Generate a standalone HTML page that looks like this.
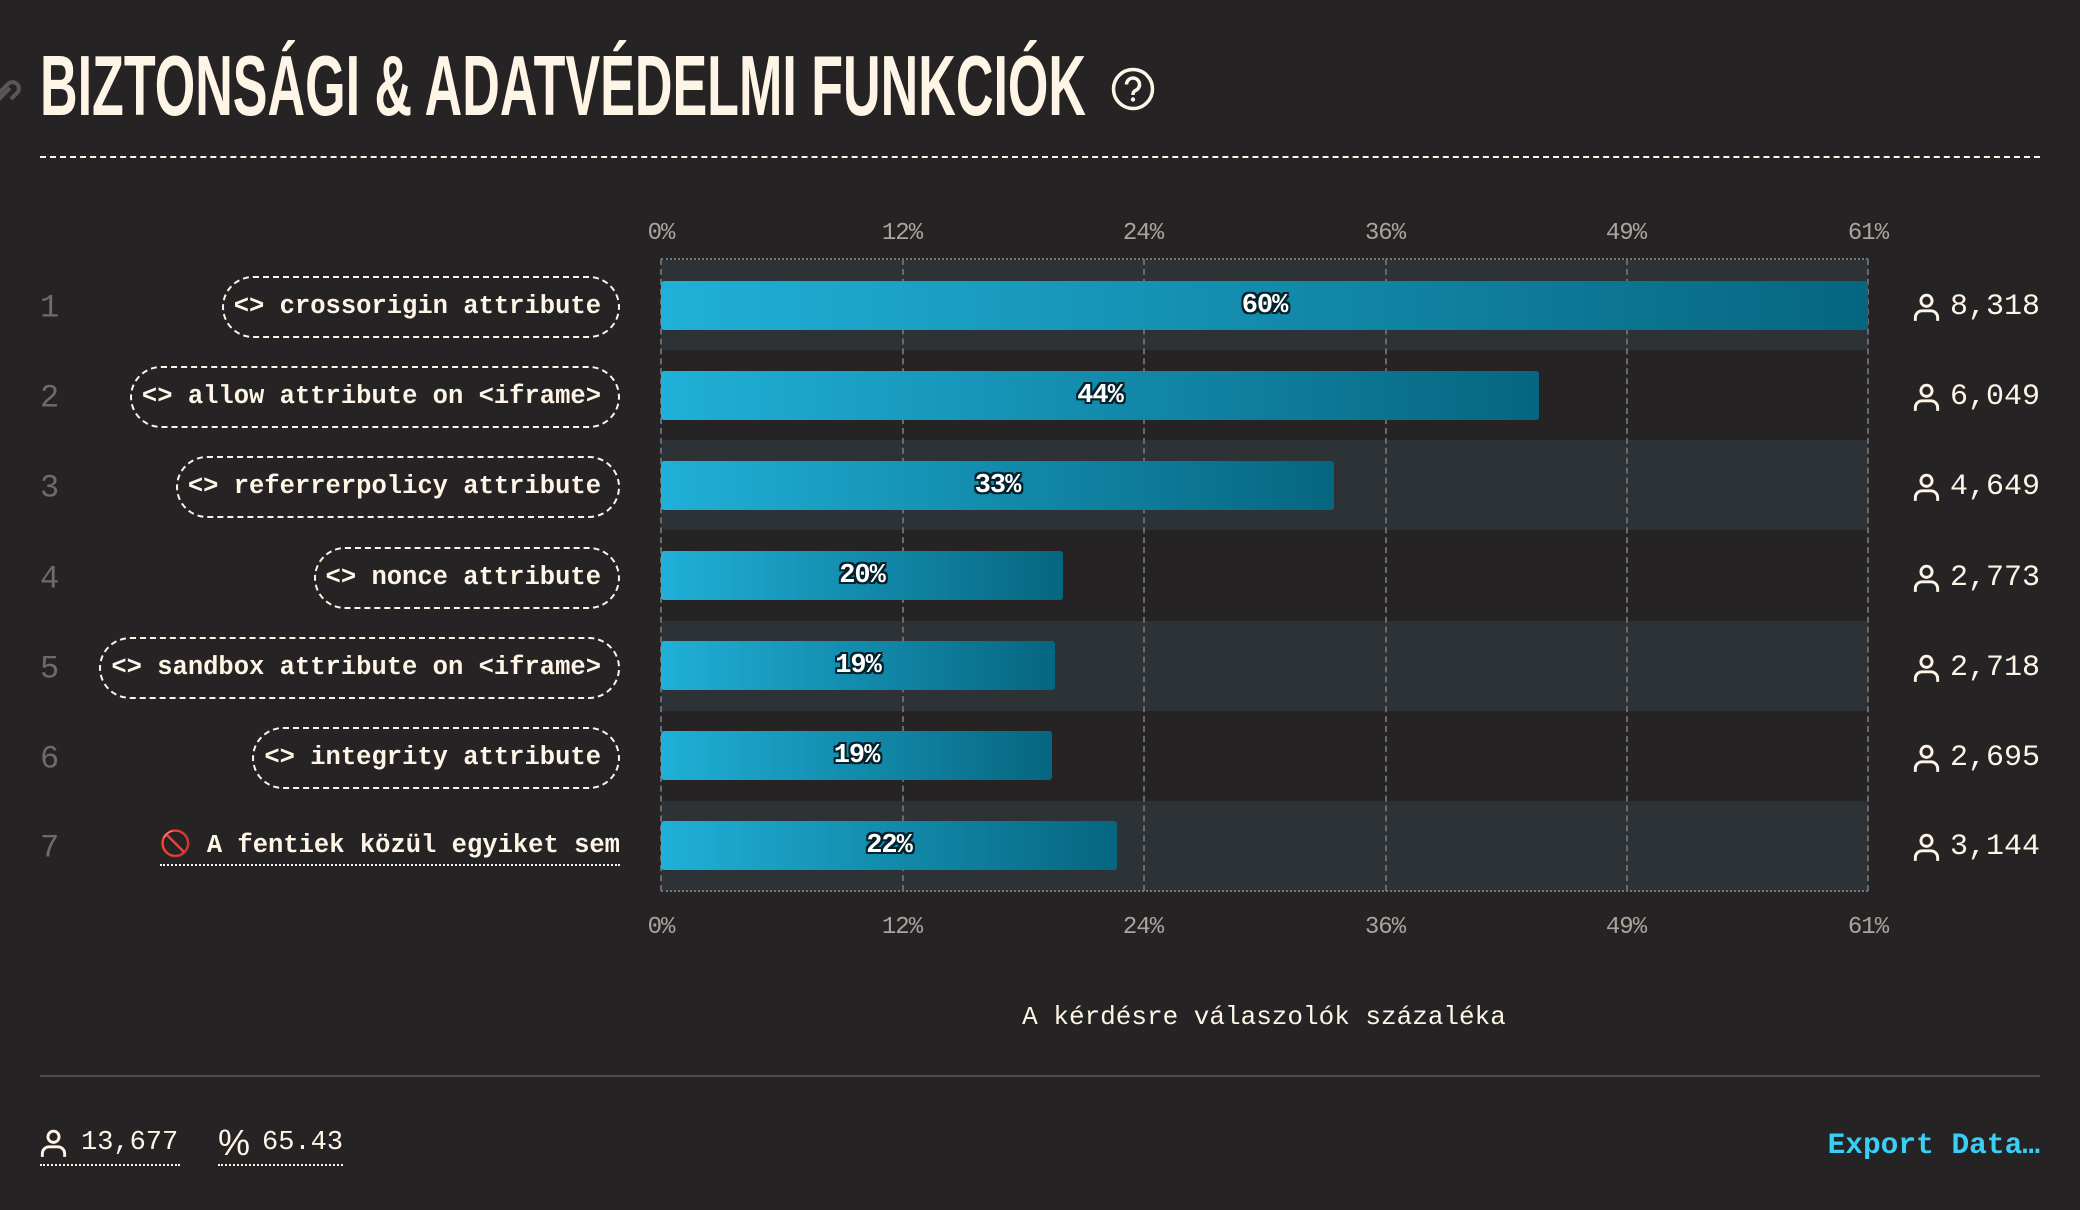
<!DOCTYPE html>
<html><head><meta charset="utf-8"><style>
*{margin:0;padding:0;box-sizing:border-box}
body{width:2080px;height:1210px;background:#262325;overflow:hidden;position:relative;font-family:"Liberation Mono",monospace;color:#fff5e6}
.abs{position:absolute}
.band{position:absolute;left:661px;width:1207px;height:90px;background:#2c3236}
.vl{position:absolute;top:259px;height:632px;border-left:2px dashed #6a6a6a;width:0}
.tick{position:absolute;font-size:24px;color:#aaa49c;transform:translateX(-50%);letter-spacing:-1px}
.bar{position:absolute;left:661px;height:49px;border-radius:3px;background:linear-gradient(90deg,#20b0d8,#066680)}
.bl{position:absolute;top:1px;height:49px;line-height:49px;font-weight:bold;font-size:27px;color:#fff;transform:translateX(-50%);text-shadow:-2px -2px 0 #04222c,2px -2px 0 #04222c,-2px 2px 0 #04222c,2px 2px 0 #04222c,0 2px 0 #04222c,0 -2px 0 #04222c,2px 0 0 #04222c,-2px 0 0 #04222c;letter-spacing:-1px}
.num{position:absolute;left:40px;font-size:32px;color:#6f6b69;transform:translateY(-50%)}
.pill{position:absolute;right:1460px;height:62px;border:2.5px dashed #fff5e6;border-radius:31px;padding:0 17px 0 10px;font-weight:bold;font-size:25.5px;line-height:57px;white-space:nowrap;transform:translateY(-50%)}
.cnt{position:absolute;right:40px;font-size:30px;transform:translateY(-50%);display:flex;align-items:center;gap:10px}
</style></head><body>
<svg class="abs" style="left:0;top:66px" width="22" height="50" viewBox="0 0 22 50"><g fill="none" stroke="#5a5656" stroke-width="4"><path d="M-4 30 l12 -12 a6 6 0 0 1 9 9 l-6 6"/><path d="M10 22 l-12 12"/></g></svg>
<svg class="abs" style="left:40px;top:40px" width="1060" height="90"><text x="0" y="75" textLength="1046" lengthAdjust="spacingAndGlyphs" font-family="Liberation Sans, sans-serif" font-weight="bold" font-size="85" fill="#fff5e6">BIZTONSÁGI &amp; ADATVÉDELMI FUNKCIÓK</text></svg>
<svg class="abs" style="left:1110px;top:66px" width="46" height="46" viewBox="0 0 46 46"><circle cx="23" cy="23" r="19.5" fill="none" stroke="#fff5e6" stroke-width="3.5"/><path d="M16.5 18.5a6.5 6.5 0 1 1 9 6c-2 1-2.5 2-2.5 4.5" fill="none" stroke="#fff5e6" stroke-width="3.5"/><circle cx="23" cy="33.5" r="2.2" fill="#fff5e6"/></svg>
<div class="abs" style="left:40px;top:156px;width:2000px;border-top:2px dashed #fff5e6"></div>

<div class="band" style="top:260px"></div>
<div class="band" style="top:440px"></div>
<div class="band" style="top:621px"></div>
<div class="band" style="top:801px"></div>
<div class="abs" style="left:661px;top:258px;width:1207px;border-top:2px dotted #777"></div>
<div class="abs" style="left:661px;top:890px;width:1207px;border-top:2px dotted #777"></div>
<div class="vl" style="left:660px"></div><div class="vl" style="left:902px"></div><div class="vl" style="left:1143px"></div><div class="vl" style="left:1385px"></div><div class="vl" style="left:1626px"></div><div class="vl" style="left:1867px"></div>
<div class="tick" style="left:661px;top:220px">0%</div><div class="tick" style="left:902px;top:220px">12%</div><div class="tick" style="left:1143px;top:220px">24%</div><div class="tick" style="left:1385px;top:220px">36%</div><div class="tick" style="left:1626px;top:220px">49%</div><div class="tick" style="left:1868px;top:220px">61%</div>
<div class="tick" style="left:661px;top:914px">0%</div><div class="tick" style="left:902px;top:914px">12%</div><div class="tick" style="left:1143px;top:914px">24%</div><div class="tick" style="left:1385px;top:914px">36%</div><div class="tick" style="left:1626px;top:914px">49%</div><div class="tick" style="left:1868px;top:914px">61%</div>

<div class="bar" style="top:281px;width:1207px"><span class="bl" style="left:50%">60%</span></div>
<div class="bar" style="top:371px;width:878px"><span class="bl" style="left:50%">44%</span></div>
<div class="bar" style="top:461px;width:673px"><span class="bl" style="left:50%">33%</span></div>
<div class="bar" style="top:551px;width:402px"><span class="bl" style="left:50%">20%</span></div>
<div class="bar" style="top:641px;width:394px"><span class="bl" style="left:50%">19%</span></div>
<div class="bar" style="top:731px;width:391px"><span class="bl" style="left:50%">19%</span></div>
<div class="bar" style="top:821px;width:456px"><span class="bl" style="left:50%">22%</span></div>

<div class="num" style="top:308px">1</div><div class="num" style="top:398px">2</div><div class="num" style="top:488px">3</div><div class="num" style="top:579px">4</div><div class="num" style="top:669px">5</div><div class="num" style="top:759px">6</div><div class="num" style="top:848px">7</div>

<div class="pill" style="top:307px">&lt;&gt; crossorigin attribute</div>
<div class="pill" style="top:397px">&lt;&gt; allow attribute on &lt;iframe&gt;</div>
<div class="pill" style="top:487px">&lt;&gt; referrerpolicy attribute</div>
<div class="pill" style="top:578px">&lt;&gt; nonce attribute</div>
<div class="pill" style="top:668px">&lt;&gt; sandbox attribute on &lt;iframe&gt;</div>
<div class="pill" style="top:758px">&lt;&gt; integrity attribute</div>
<div class="abs" style="right:1460px;top:828px;font-weight:bold;font-size:25.5px;line-height:36px;border-bottom:2px dotted #fff5e6;white-space:nowrap;font-family:'Liberation Mono','Noto Sans CJK JP',monospace"><span style="color:#e0392b">🚫</span> A fentiek közül egyiket sem</div>

<svg width="0" height="0" style="position:absolute"><defs><symbol id="p" viewBox="0 0 24 26"><circle cx="12" cy="7" r="5" fill="none" stroke="#fff5e6" stroke-width="2.6"/><path d="M2 25v-3a6 6 0 0 1 6-6h8a6 6 0 0 1 6 6v3" fill="none" stroke="#fff5e6" stroke-width="2.6"/></symbol></defs></svg>
<div class="cnt" style="top:307px"><svg width="27" height="29"><use href="#p"/></svg>8,318</div>
<div class="cnt" style="top:397px"><svg width="27" height="29"><use href="#p"/></svg>6,049</div>
<div class="cnt" style="top:487px"><svg width="27" height="29"><use href="#p"/></svg>4,649</div>
<div class="cnt" style="top:578px"><svg width="27" height="29"><use href="#p"/></svg>2,773</div>
<div class="cnt" style="top:668px"><svg width="27" height="29"><use href="#p"/></svg>2,718</div>
<div class="cnt" style="top:758px"><svg width="27" height="29"><use href="#p"/></svg>2,695</div>
<div class="cnt" style="top:847px"><svg width="27" height="29"><use href="#p"/></svg>3,144</div>

<div class="abs" style="left:1264px;top:1002px;transform:translateX(-50%);font-size:26px;white-space:nowrap">A kérdésre válaszolók százaléka</div>
<div class="abs" style="left:40px;top:1075px;width:2000px;border-top:2px solid #4e4b4b"></div>

<div class="abs" style="left:40px;top:1122px;height:44px;border-bottom:2px dotted #fff5e6;font-size:27px;display:flex;align-items:center;gap:14px;padding-right:2px"><svg width="27" height="29"><use href="#p"/></svg>13,677</div>
<div class="abs" style="left:218px;top:1122px;height:44px;border-bottom:2px dotted #fff5e6;font-size:27px;display:flex;align-items:center;gap:12px"><span style="font-size:36px;font-family:'Liberation Sans',sans-serif">%</span>65.43</div>
<div class="abs" style="right:40px;top:1128px;font-size:29.5px;font-weight:bold;color:#38cff5">Export Data…</div>
</body></html>
